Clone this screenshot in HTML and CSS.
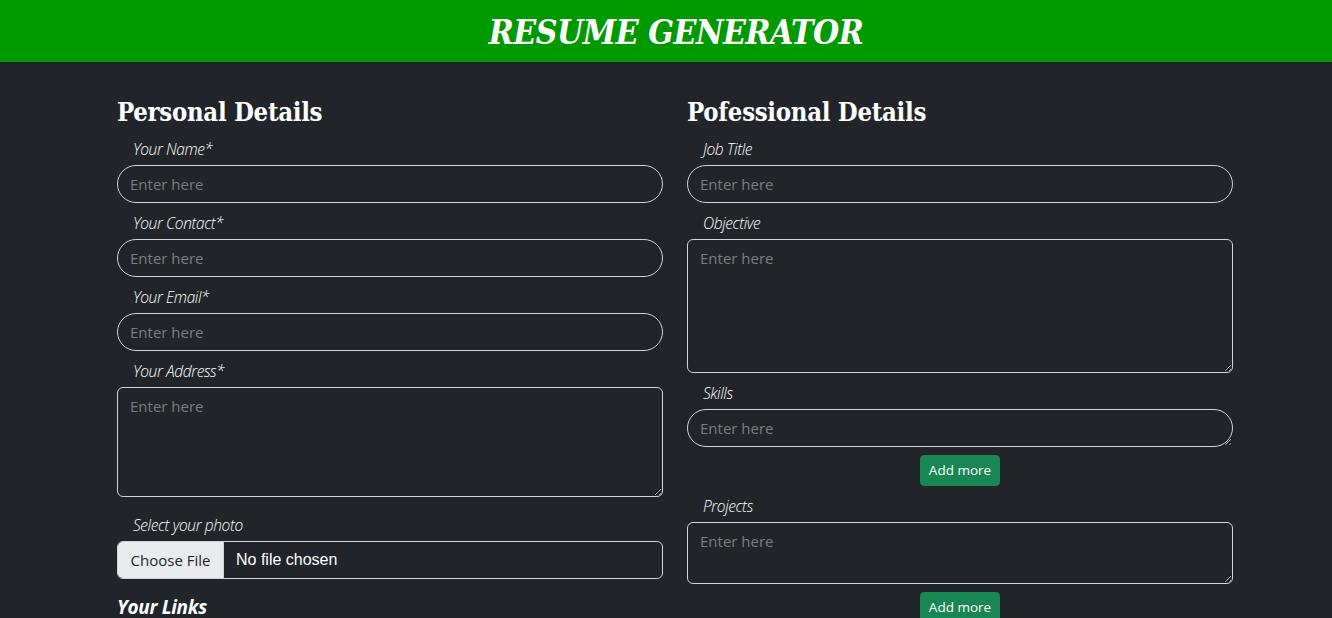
FILE: index.html
```html
<!DOCTYPE html>
<html lang="en">
<head>
  <meta charset="UTF-8">
  <title>Resume Generator</title>
  <meta name="viewport" content="width=device-width, initial-scale=1">
  <link rel="stylesheet" href="styles.css">
</head>
<body>

<header class="topbar">
  <h1 class="title">RESUME GENERATOR</h1>
</header>

<main class="container">
  <div class="row">

    <section class="col">
      <h3 class="section-title">Personal Details</h3>

      <div class="field">
        <label class="field-label">Your Name*</label>
        <input class="input pill" type="text" placeholder="Enter here">
      </div>

      <div class="field">
        <label class="field-label">Your Contact*</label>
        <input class="input pill" type="text" placeholder="Enter here">
      </div>

      <div class="field">
        <label class="field-label">Your Email*</label>
        <input class="input pill" type="text" placeholder="Enter here">
      </div>

      <div class="field">
        <label class="field-label">Your Address*</label>
        <textarea class="input area address" placeholder="Enter here"></textarea>
      </div>

      <div class="field photo">
        <label class="field-label">Select your photo</label>
        <div class="file-input">
          <span class="file-btn">Choose File</span>
          <span class="file-name">No file chosen</span>
        </div>
      </div>

      <h5 class="links-title">Your Links</h5>
    </section>

    <section class="col">
      <h3 class="section-title">Pofessional Details</h3>

      <div class="field">
        <label class="field-label">Job Title</label>
        <input class="input pill" type="text" placeholder="Enter here">
      </div>

      <div class="field">
        <label class="field-label">Objective</label>
        <textarea class="input area objective" placeholder="Enter here"></textarea>
      </div>

      <div class="field">
        <label class="field-label">Skills</label>
        <textarea class="input pill skills" placeholder="Enter here"></textarea>
      </div>
      <div class="add-row">
        <button class="btn-add">Add more</button>
      </div>

      <div class="field">
        <label class="field-label">Projects</label>
        <textarea class="input area projects" placeholder="Enter here"></textarea>
      </div>
      <div class="add-row">
        <button class="btn-add">Add more</button>
      </div>
    </section>

  </div>
</main>

</body>
</html>
```

FILE: styles.css
```css
* {
  box-sizing: border-box;
}

body {
  margin: 0;
  background: #212529;
  color: #dee2e6;
  font-family: "Open Sans", "Liberation Sans", sans-serif;
  font-size: 16px;
  overflow: hidden;
}

.topbar {
  background: #009900;
  height: 62px;
  display: flex;
  justify-content: center;
  align-items: center;
  padding-left: 20px;
  padding-top: 3px;
}

.title {
  margin: 0;
  color: #fff;
  font-family: "DejaVu Serif", serif;
  font-style: italic;
  font-weight: bold;
  font-stretch: condensed;
  font-size: 33.5px;
  letter-spacing: -0.5px;
}

.container {
  padding: 0 99px 0 117px;
}

.row {
  display: grid;
  grid-template-columns: 546px 546px;
  gap: 24px;
}

.section-title {
  margin: 33px 0 0;
  color: #fff;
  font-family: "DejaVu Serif", serif;
  font-weight: bold;
  font-stretch: condensed;
  font-size: 25.5px;
  line-height: 34px;
  letter-spacing: -0.3px;
}

.field {
  display: flex;
  flex-direction: column;
}

.field-label {
  margin: 8px 0 4px 16px;
  line-height: 24px;
  font-size: 15.5px;
  font-style: italic;
  font-weight: 300;
  letter-spacing: -0.4px;
  color: #fff;
}

.input {
  display: block;
  width: 100%;
  background: #212529;
  border: 1px solid #ced4da;
  color: #dee2e6;
  font-family: "Open Sans", "Liberation Sans", sans-serif;
  font-size: 15px;
  padding: 6px 12px;
  margin: 0;
}

.input::placeholder {
  color: #7a7e83;
}

.pill {
  height: 38px;
  border-radius: 50rem;
  line-height: 24px;
}

.skills {
  resize: vertical;
}

.area {
  border-radius: 6px;
  line-height: 24px;
}

.address {
  height: 110px;
}

.objective {
  height: 134px;
}

.projects {
  height: 62px;
}

.photo {
  margin-top: 8px;
}

.file-input {
  display: flex;
  height: 38px;
  border: 1px solid #ced4da;
  border-radius: 6px;
  overflow: hidden;
}

.file-btn {
  background: #e9ecef;
  color: #212529;
  width: 106px;
  display: flex;
  align-items: center;
  justify-content: center;
  font-size: 15px;
  border-right: 1px solid #ced4da;
}

.file-name {
  display: flex;
  align-items: center;
  padding-left: 12px;
  color: #fff;
  font-family: "Liberation Sans", sans-serif;
  font-size: 16px;
}

.links-title {
  margin: 16px 0 0;
  color: #fff;
  font-family: "Open Sans", sans-serif;
  font-style: italic;
  font-weight: bold;
  font-size: 19px;
  line-height: 24px;
  letter-spacing: -0.3px;
}

.add-row {
  display: flex;
  justify-content: center;
  margin-top: 8px;
}

.btn-add {
  background: #198754;
  color: #fff;
  border: 1px solid #198754;
  border-radius: 4px;
  font-family: "Open Sans", "Liberation Sans", sans-serif;
  font-size: 13.5px;
  line-height: 21px;
  padding: 4px 8px;
  cursor: pointer;
}
```
